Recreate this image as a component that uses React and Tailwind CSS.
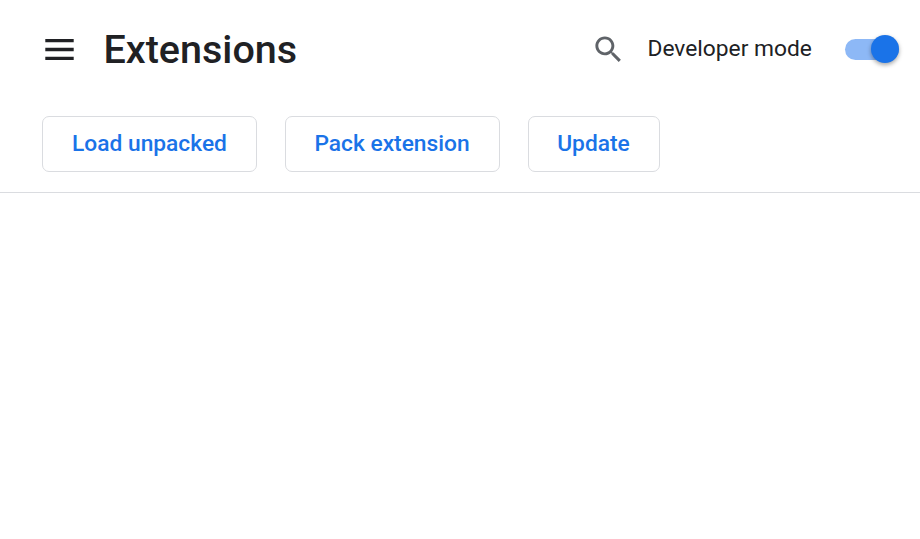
export default function App() {
  return (
    <div className="h-[539px] w-[920px] overflow-hidden bg-white font-['Roboto',sans-serif] text-[#202124]">
      <header className="flex h-[98px] items-center pl-[42px] pr-[21px]">
        <button aria-label="Main menu" className="flex h-9 w-[35px] items-center justify-center">
          <svg viewBox="0 0 35 36" className="h-9 w-[35px]" fill="#202124">
            <path d="M3.3 8h28.4v3.3H3.3zM3.3 16.75h28.4v3.5H3.3zM3.3 25.7h28.4V29H3.3z" />
          </svg>
        </button>
        <h1 className="ml-[26.5px] pt-px text-[39.5px] font-medium leading-[48px]">Extensions</h1>
        <svg viewBox="0 0 24 24" className="ml-auto h-[35px] w-[35px]" fill="#5f6368">
          <path d="M15.5 14h-.79l-.28-.27C15.41 12.59 16 11.11 16 9.5 16 5.91 13.09 3 9.5 3S3 5.91 3 9.5 5.91 16 9.5 16c1.61 0 3.09-.59 4.23-1.57l.27.28v.79l5 4.99L20.49 19l-4.99-5zm-6 0C7.01 14 5 11.99 5 9.5S7.01 5 9.5 5 14 7.01 14 9.5 11.99 14 9.5 14z" />
        </svg>
        <span className="ml-[21.5px] w-[165px] whitespace-nowrap text-[22.75px] leading-[32px]">Developer mode</span>
        <span role="switch" aria-checked="true" className="ml-[32.5px] flex h-[21px] w-[54px] items-center justify-end rounded-full bg-[#8db8f6]">
          <span className="h-7 w-7 shrink-0 rounded-full bg-[#1a73e8] shadow-[0_2px_4px_rgba(0,0,0,0.35)]" />
        </span>
      </header>
      <div className="flex h-[95px] gap-7 border-b border-[#dadce0] pl-[42px] pt-[18px] text-[22.75px] font-medium text-[#1a73e8]">
        <button className="h-14 w-[215px] rounded-[7px] border border-[#dadce0]">Load unpacked</button>
        <button className="h-14 w-[215px] rounded-[7px] border border-[#dadce0] pr-px">Pack extension</button>
        <button className="h-14 w-[132px] rounded-[7px] border border-[#dadce0] pr-px">Update</button>
      </div>
    </div>
  );
}
